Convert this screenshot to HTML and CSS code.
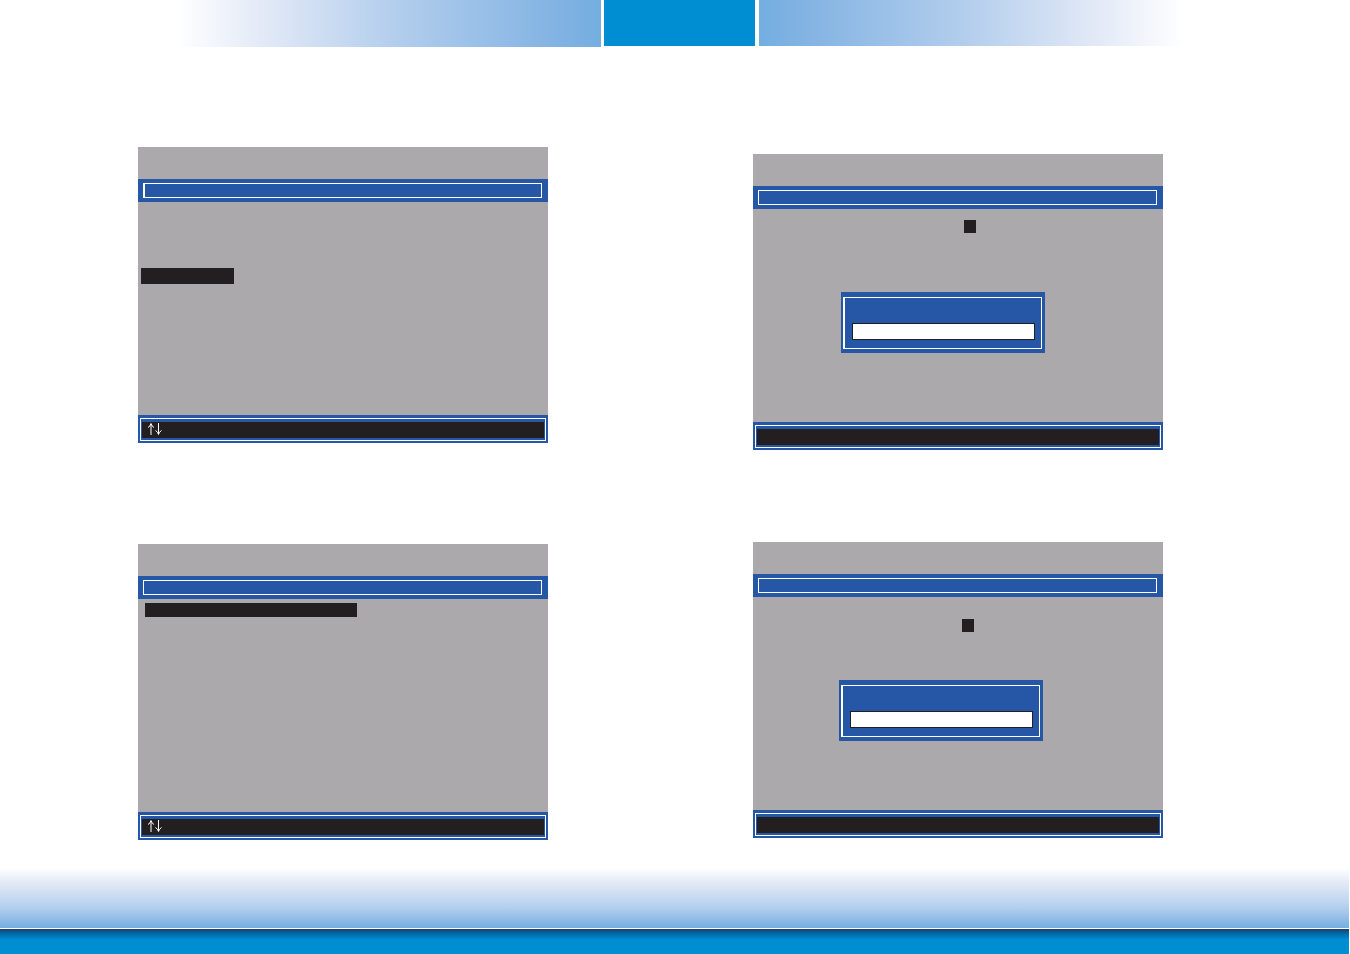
FILE: index.html
```
<!DOCTYPE html>
<html lang="en">
  <head>
    <meta charset="UTF-8" />
    <title>BIOS Setup</title>
    <link rel="stylesheet" href="styles.css">
  </head>
  <body>
    <header class="page-header">
      <div class="fade fade-left"></div>
      <div class="chapter-tab"></div>
      <div class="fade fade-right"></div>
    </header>

    <main class="screens">
      <div class="column column-left">
        <section class="screen">
          <div class="title-bar"><div class="title-frame title-thick"></div></div>
          <div class="screen-body menu-body">
            <div class="selected-item"></div>
          </div>
          <div class="status-bar">
            <div class="status-frame">
              <div class="status-text">
                <svg class="arrows" viewBox="0 0 16 14" role="img" aria-label="Up and down arrows">
                  <path d="M4 13V2M1 5.5Q3.5 4 4 1.5Q4.5 4 7 5.5M11.5 1V12M8.500 8.500Q11 10 11.500 12.500Q12 10 14.500 8.500" />
                </svg>
              </div>
            </div>
          </div>
        </section>

        <section class="screen">
          <div class="title-bar"><div class="title-frame"></div></div>
          <div class="screen-body list-body">
            <div class="selected-item selected-wide"></div>
          </div>
          <div class="status-bar">
            <div class="status-frame">
              <div class="status-text">
                <svg class="arrows" viewBox="0 0 16 14" role="img" aria-label="Up and down arrows">
                  <path d="M4 13V2M1 5.5Q3.5 4 4 1.5Q4.5 4 7 5.5M11.5 1V12M8.500 8.500Q11 10 11.500 12.500Q12 10 14.500 8.500" />
                </svg>
              </div>
            </div>
          </div>
        </section>
      </div>

      <div class="column column-right">
        <section class="screen">
          <div class="title-bar"><div class="title-frame"></div></div>
          <div class="screen-body prompt-body">
            <div class="cursor"></div>
            <div class="dialog">
              <div class="dialog-frame">
                <input class="dialog-input" type="text" aria-label="Value" />
              </div>
            </div>
          </div>
          <div class="status-bar"><div class="status-frame"><div class="status-text"></div></div></div>
        </section>

        <section class="screen">
          <div class="title-bar"><div class="title-frame"></div></div>
          <div class="screen-body prompt-body prompt-low">
            <div class="cursor"></div>
            <div class="dialog">
              <div class="dialog-frame">
                <input class="dialog-input" type="text" aria-label="Value" />
              </div>
            </div>
          </div>
          <div class="status-bar"><div class="status-frame"><div class="status-text"></div></div></div>
        </section>
      </div>
    </main>

    <footer class="page-footer">
      <div class="footer-fade"></div>
      <div class="footer-bar"></div>
    </footer>
  </body>
</html>
```

FILE: styles.css
```
* {
  box-sizing: border-box;
}
body {
  margin: 0;
  min-height: 100vh;
  display: flex;
  flex-direction: column;
  background-color: #fff;
  font-family: "Liberation Serif", serif;
}

/* header */
.page-header {
  display: flex;
  padding: 0 166px 0 176px;
}
.fade {
  flex: 1;
  height: 46px;
}
.fade-left {
  height: 47px;
  margin-right: 3px;
  background: linear-gradient(to left, #73aee0, #84b4e3 12%, #b5cfed 50%, #e3eaf7 80%, #fff);
}
.fade-right {
  margin-left: 4px;
  background: linear-gradient(to right, #73aee0, #84b4e3 12%, #b5cfed 50%, #e3eaf7 80%, #fff);
}
.chapter-tab {
  width: 151px;
  height: 46px;
  background-color: #008ed3;
}

/* screens */
.screens {
  display: grid;
  grid-template-columns: 1fr 1fr;
  column-gap: 205px;
  padding: 100px 187px 28px 138px;
}
.column {
  display: flex;
  flex-direction: column;
}
.column-left {
  gap: 101px;
}
.column-right {
  gap: 92px;
  padding-top: 7px;
}
.screen {
  padding-top: 32px;
  background-color: #aba9ab;
}
.title-bar {
  padding: 4px 6px 4px 5px;
  background-color: #2657a6;
}
.title-frame {
  height: 15px;
  border: 1px solid #fff;
}
.title-thick {
  border-left-width: 2px;
}
.screen-body {
  height: 213px;
}
.menu-body {
  padding: 66px 3px 0;
}
.list-body {
  padding: 4px 7px 0;
}
.selected-item {
  width: 93px;
  height: 16px;
  background-color: #231f20;
}
.selected-wide {
  width: 212px;
  height: 14px;
}
.status-bar {
  padding: 3px 2px 2px;
  background-color: #2657a6;
}
.status-frame {
  padding: 3px 1px 2px;
  border: 1px solid #fff;
}
.status-text {
  height: 16px;
  padding-left: 5px;
  background-color: #231f20;
}
.arrows {
  display: block;
  width: 16px;
  height: 14px;
  fill: none;
  stroke: #fff;
  stroke-width: 1;
}

/* input prompt */
.prompt-body {
  padding: 11px 0 0 88px;
}
.cursor {
  width: 12px;
  height: 13px;
  margin: 0 0 59px 123px;
  background-color: #231f20;
}
.dialog {
  width: 204px;
  padding: 5px 3px 4px 2px;
  background-color: #2657a6;
}
.dialog-frame {
  height: 52px;
  padding: 25px 6px 0 7px;
  border: 1px solid #fff;
  border-left-width: 2px;
}
.dialog-input {
  display: block;
  width: 100%;
  height: 17px;
  padding: 0 4px;
  border: 1px solid #231f20;
  border-radius: 0;
  background-color: #fff;
  font-size: 12px;
}
.prompt-low {
  padding: 22px 0 0 86px;
}
.prompt-low .cursor {
  margin-bottom: 48px;
}

/* footer */
.page-footer {
  margin-top: auto;
  margin-right: 1px;
}
.footer-fade {
  height: 60px;
  background: linear-gradient(#fff, #e8edf8 20%, #b5cfed 65%, #73aee0);
}
.footer-bar {
  height: 26px;
  border-top: 1px solid #fff;
  background: linear-gradient(#1c3f72, #006ca8 5px, #008ed3 11px);
}
```
